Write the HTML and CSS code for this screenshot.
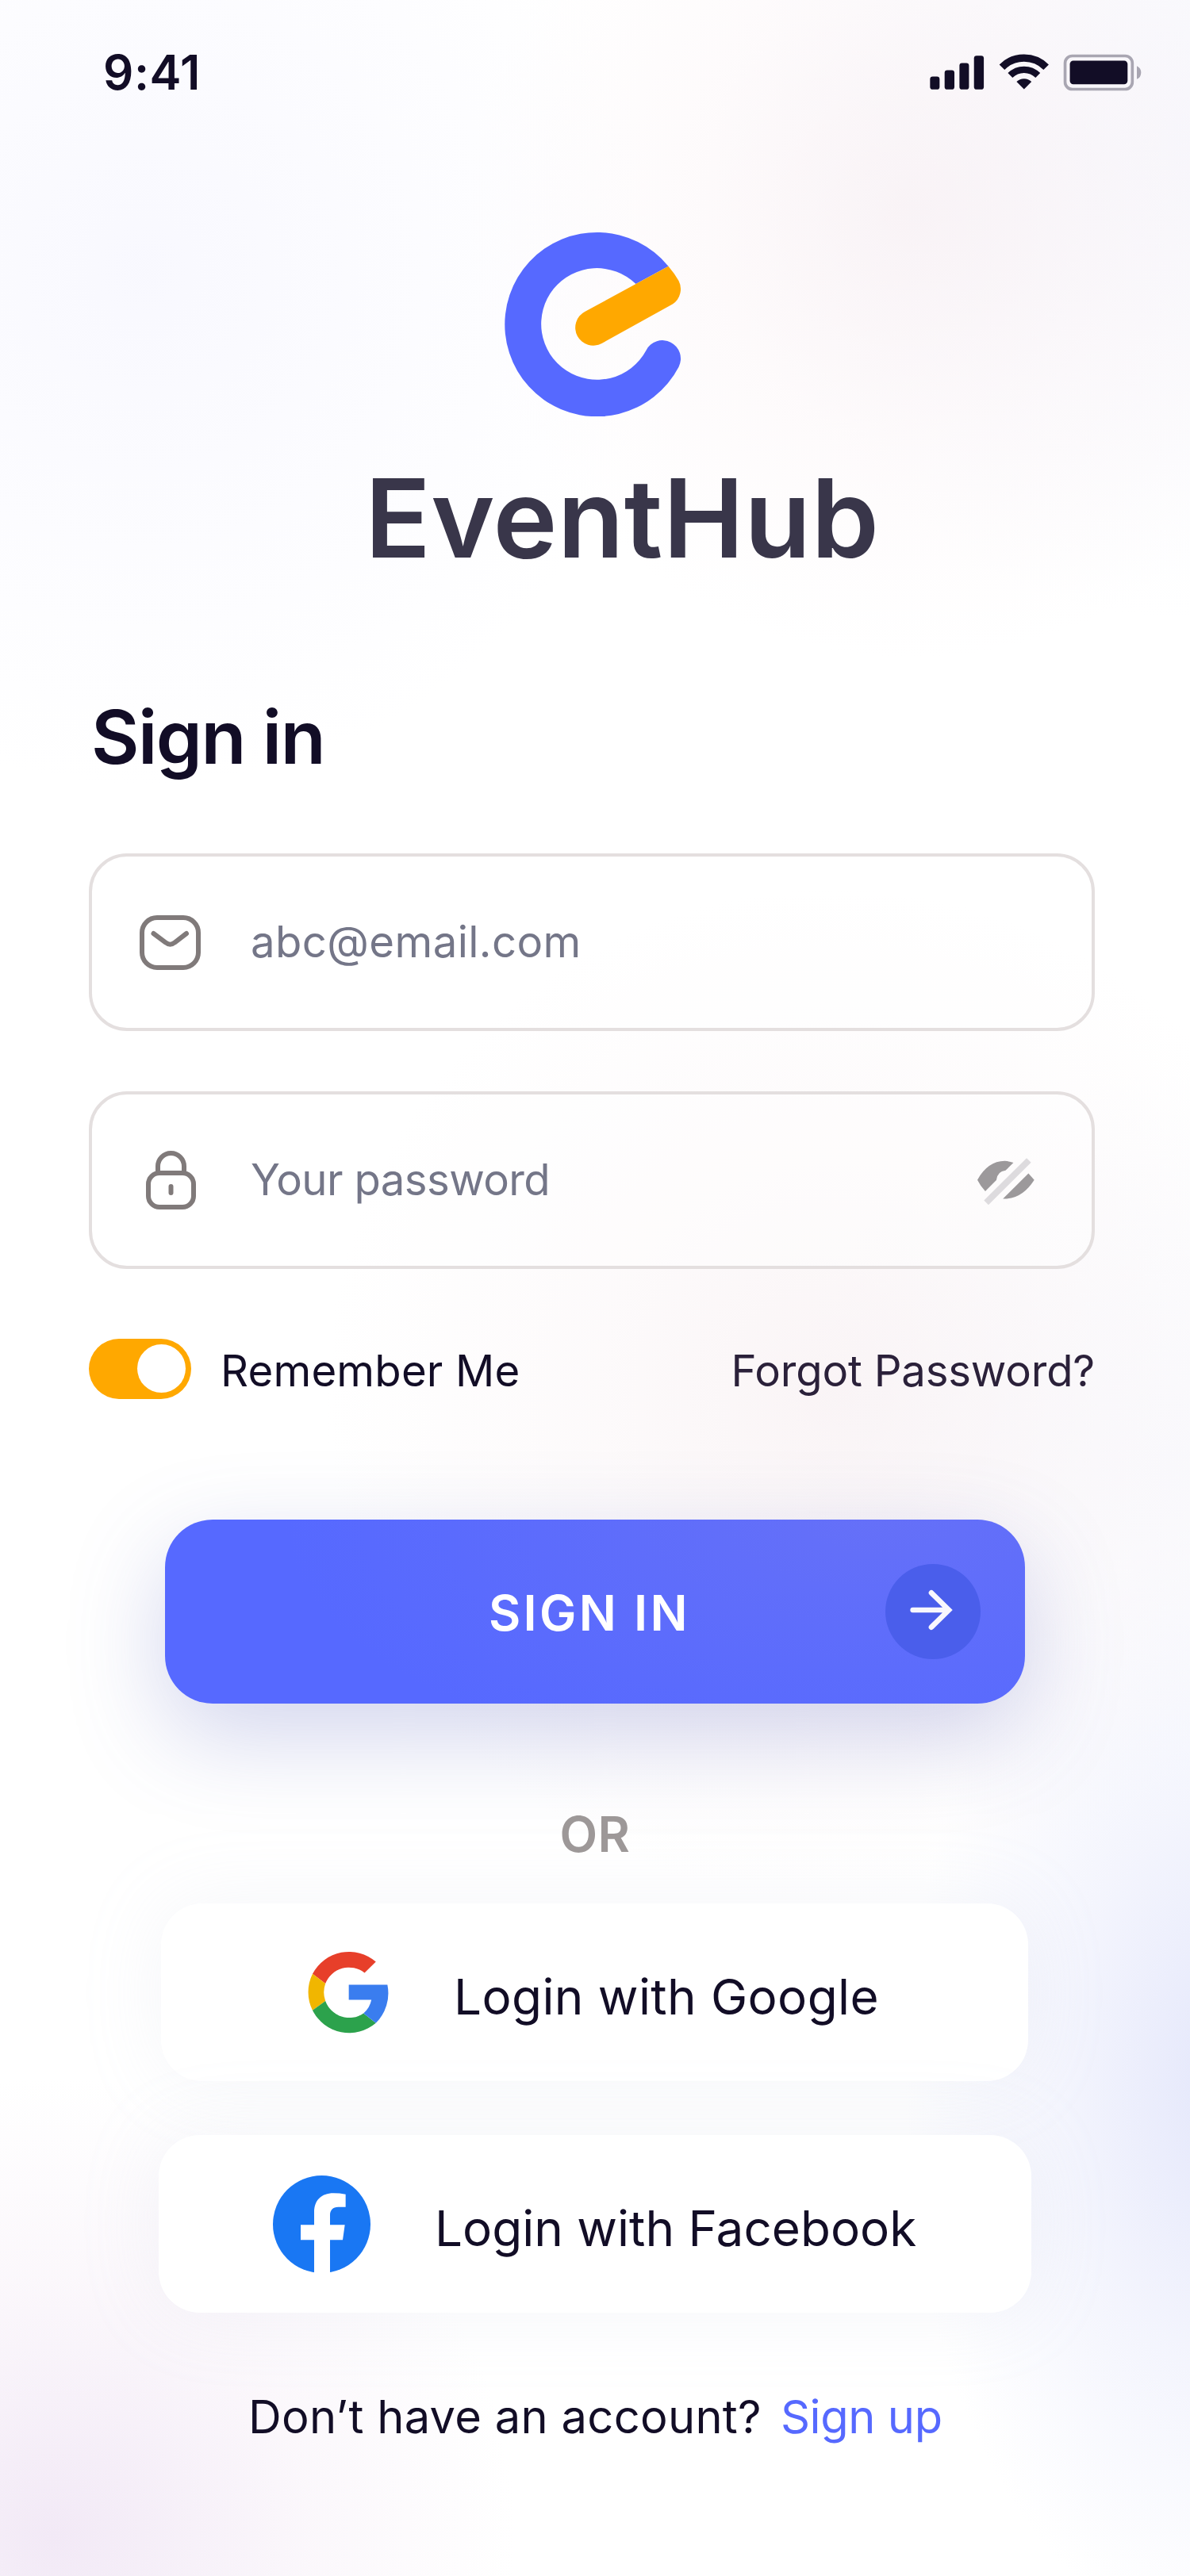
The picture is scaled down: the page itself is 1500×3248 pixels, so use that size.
FILE: index.html
```
<!DOCTYPE html>
<html lang="en">
	<head>
		<meta charset="utf-8" />
		<title>EventHub - Sign in</title>
		<link rel="stylesheet" href="styles.css">
	</head>
	<body>
		<div class="screen">
			<!--status bar-->
			<div class="status">
				<span class="time">9:41</span>
				<svg class="status-icons" viewBox="68 56 800 140">
					<g fill="#120d26">
						<rect x="69" y="141" width="36" height="49" rx="10"/>
						<rect x="124" y="117" width="37" height="73" rx="10"/>
						<rect x="180" y="90" width="36" height="100" rx="10"/>
						<rect x="235" y="62" width="37" height="128" rx="10"/>
						<path d="M424 189L395.7 160.7A40 40 0 0 1 452.3 160.7Z"/>
						<rect x="597" y="81" width="218" height="89" rx="13"/>
					</g>
					<g fill="none" stroke="#120d26">
						<path d="M340.6 105.6A118 118 0 0 1 507.4 105.6" stroke-width="28"/>
						<path d="M371.7 136.7A74 74 0 0 1 476.3 136.7" stroke-width="25"/>
					</g>
					<rect x="579" y="63" width="254" height="126" rx="27" fill="none" stroke="#a9a6b2" stroke-width="11"/>
					<path d="M850 101Q866 108 866 126Q866 144 850 151Z" fill="#a9a6b2"/>
				</svg>
			</div>

			<!--logo-->
			<div class="brand">
				<svg class="logo" viewBox="108 66 668 699">
					<path fill="#5669ff" d="M727 197A348.5 348.5 0 1 0 766 578A69 69 0 1 0 643 515A211 211 0 1 1 604 264Z"/>
					<path fill="#ffa800" d="M411 369L727 197A348.5 348.5 0 0 1 766 252A69 69 0 0 1 744 340L475 489A68 68 0 0 1 411 369Z"/>
				</svg>
				<div class="name">EventHub</div>
			</div>

			<!--form-->
			<form class="form">
				<h1>Sign in</h1>
				<div class="field">
					<svg class="icon mail" viewBox="0 0 77 69">
						<rect x="3" y="3" width="71" height="63" rx="19"/>
						<path d="M17.5 23L33 34.5Q38.5 39 44 34.5L59 23"/>
					</svg>
					<input class="email" type="text" placeholder="abc@email.com">
				</div>
				<div class="field">
					<svg class="icon lock" viewBox="0 0 63 74">
						<rect x="3" y="28" width="57" height="43" rx="14"/>
						<path d="M15 28V19.5a16.5 16.5 0 0 1 33 0V28M31.5 45v8"/>
					</svg>
					<input class="pass" type="text" placeholder="Your password">
					<svg class="eye" viewBox="156 300 217 180">
						<path fill="#9c999b" d="M156 383Q195 312 260 311Q278 312 293 318L263 347Q232 350 228 384L186 426Q168 407 156 383Z"/>
						<path fill="#9c999b" d="M350 358L372 383Q325 457 253 455Z"/>
						<path fill="#dddbde" d="M343 300L360 317L198 478L181 461Z"/>
					</svg>
				</div>
				<div class="options">
					<div class="toggle"></div>
					<label>Remember Me</label>
					<a href="javascript:;" class="forgot">Forgot Password?</a>
				</div>
				<div class="submit">
					<span>SIGN IN</span>
					<div class="arrow">
						<svg viewBox="0 0 360 360">
							<path d="M104 174H236M174 109L240 174L174 239"/>
						</svg>
					</div>
				</div>
			</form>

			<div class="or">OR</div>

			<!--other logins-->
			<div class="social google">
				<svg viewBox="0 0 308 312">
					<path fill="#e73f2a" d="M259 40A156 156 0 0 0 18 86L67 123A96 96 0 0 1 216 82Z"/>
					<path fill="#f1b600" d="M18 86A156 156 0 0 0 18 225L67 189A96 96 0 0 1 67 123Z"/>
					<path fill="#2ca24c" d="M18 225A156 156 0 0 0 259 273L212 236A96 96 0 0 1 67 189Z"/>
					<path fill="#3a7def" d="M259 273A150 156 0 0 0 303 127H156V185H242Q236 216 212 236Z"/>
				</svg>
				<span>Login with Google</span>
			</div>
			<div class="social facebook">
				<svg viewBox="0 0 369 369">
					<circle cx="184.5" cy="184.5" r="184.5" fill="#1977f3"/>
					<path fill="#fff" d="M156 369V244H105V187H156V139C156 94 183 67 229 67Q252 67 275 71V119H247C227 119 216 131 216 149V187H272L264 244H216V369Z"/>
				</svg>
				<span>Login with Facebook</span>
			</div>

			<div class="signup">
				<span>Don’t have an account?</span>
				<a href="javascript:;">Sign up</a>
			</div>
		</div>
	</body>
</html>
```
FILE: styles.css
```
body,h1,form{
	margin: 0;
	padding: 0;
}
body{
	font-family: Inter, "Liberation Sans", sans-serif;
	color: #120d26;
}
a{
	text-decoration: none;
}
svg{
	display: block;
	flex-shrink: 0;
}
.screen{
	width: 1500px;
	height: 3248px;
	overflow: hidden;
	background:
		radial-gradient(circle 560px at 1150px 270px, rgba(246,234,238,.5), rgba(250,240,243,.3) 50%, transparent),
		radial-gradient(circle 600px at 1500px 180px, rgba(240,242,252,.55), transparent),
		radial-gradient(circle 650px at 180px 340px, rgba(244,244,254,.6), transparent),
		radial-gradient(circle 640px at 1050px 1760px, rgba(245,234,237,.5), rgba(249,242,244,.35) 50%, transparent),
		radial-gradient(circle 500px at 1480px 1850px, rgba(243,245,253,.5), transparent),
		radial-gradient(ellipse 400px 700px at 1540px 2630px, #e4e7fb, rgba(236,238,252,.6) 50%, transparent),
		radial-gradient(circle 580px at 70px 3200px, #f2e9f6, rgba(247,240,248,.5) 55%, transparent),
		#fff;
}

/* status bar */
.status{
	display: flex;
	align-items: center;
	justify-content: space-between;
	height: 182px;
	padding: 0 61px 0 130px;
}
.time{
	font-size: 60px;
	font-weight: 600;
	letter-spacing: .5px;
}
.status-icons{
	width: 267px;
	height: 47px;
	margin-top: 1px;
}

/* logo */
.logo{
	width: 223px;
	height: 233px;
	margin: 110px 0 0 636px;
}
.name{
	margin: 53px 0 0 460px;
	font-size: 137px;
	line-height: 150px;
	font-weight: 570;
	letter-spacing: .3px;
	color: #39364a;
}

/* form */
.form{
	margin: 146px 120px 0 112px;
}
h1{
	margin-left: 3px;
	font-size: 93px;
	line-height: 110px;
	font-weight: 580;
	letter-spacing: -1.5px;
}
.field{
	display: flex;
	align-items: center;
	box-sizing: border-box;
	height: 224px;
	margin-top: 76px;
	padding: 0 72px 0 60px;
	border: 4px solid #e4dfdf;
	border-radius: 48px;
	background: rgba(255,255,255,.4);
}
h1 + .field{
	margin-top: 92px;
}
.icon{
	fill: none;
	stroke: #807a7a;
	stroke-width: 6;
	stroke-linecap: round;
}
.mail{
	width: 77px;
	height: 69px;
	margin-right: 63px;
}
.lock{
	width: 63px;
	height: 74px;
	margin: 0 69px 0 8px;
}
.field input{
	flex: 1;
	min-width: 0;
	padding: 0 0 2px;
	border: 0;
	outline: 0;
	background: none;
	font: 54.5px Inter, sans-serif;
}
.field input::placeholder{
	color: #747688;
	opacity: 1;
}
.field .email{
	letter-spacing: .4px;
}
.field .pass{
	letter-spacing: -.6px;
}
.eye{
	width: 72px;
	height: 60px;
	margin-top: 4px;
}
.options{
	display: flex;
	align-items: center;
	height: 76px;
	margin-top: 88px;
	font-size: 54.5px;
}
.options label,
.forgot{
	padding-top: 4px;
}
.options label{
	letter-spacing: .2px;
}
.toggle{
	box-sizing: border-box;
	width: 129px;
	height: 76px;
	margin-right: 37px;
	padding: 7px 7px 7px 61px;
	border-radius: 38px;
	background: #ffa800;
}
.toggle:after{
	content: "";
	display: block;
	width: 61px;
	height: 61px;
	border-radius: 50%;
	background: #fff;
}
.forgot{
	margin-left: auto;
	letter-spacing: -.2px;
	color: #2b213a;
}
.submit{
	display: flex;
	align-items: center;
	box-sizing: border-box;
	width: 1084px;
	height: 232px;
	margin: 152px 0 0 96px;
	padding: 0 56px 0 408px;
	border-radius: 60px;
	background: radial-gradient(ellipse 750px 330px at 900px 0, #6570f8, #5669ff);
	box-shadow: 0 40px 120px rgba(90,100,190,.27);
	color: #fff;
}
.submit span{
	padding-top: 2px;
	font-size: 62px;
	font-weight: 570;
	letter-spacing: 3.3px;
}
.arrow{
	width: 120px;
	height: 120px;
	margin-left: auto;
	border-radius: 50%;
	background: #4a5eeb;
}
.arrow path{
	fill: none;
	stroke: #f8f7fd;
	stroke-width: 20;
	stroke-linecap: round;
}
.or{
	margin: 130px 0 52px;
	text-align: center;
	font-size: 62px;
	line-height: 70px;
	font-weight: 600;
	letter-spacing: .5px;
	color: #9d9898;
}

/* other logins */
.social{
	display: flex;
	align-items: center;
	box-sizing: border-box;
	height: 224px;
	border-radius: 52px;
	background: #fff;
	box-shadow: 0 0 100px rgba(190,192,212,.15);
	font-size: 62px;
}
.social span{
	padding-top: 11px;
}
.google{
	width: 1093px;
	margin-left: 203px;
	padding-left: 185px;
	letter-spacing: .4px;
}
.google svg{
	width: 102px;
	height: 104px;
	margin-right: 82px;
}
.facebook{
	width: 1100px;
	margin: 68px 0 0 200px;
	padding-left: 144px;
}
.facebook svg{
	width: 123px;
	height: 123px;
	margin-right: 81px;
}
.signup{
	display: flex;
	margin: 96px 0 0 313px;
	font-size: 57.8px;
	line-height: 70px;
	letter-spacing: .3px;
}
.signup a{
	margin-left: 24px;
	letter-spacing: -.4px;
	color: #5669ff;
}
```
